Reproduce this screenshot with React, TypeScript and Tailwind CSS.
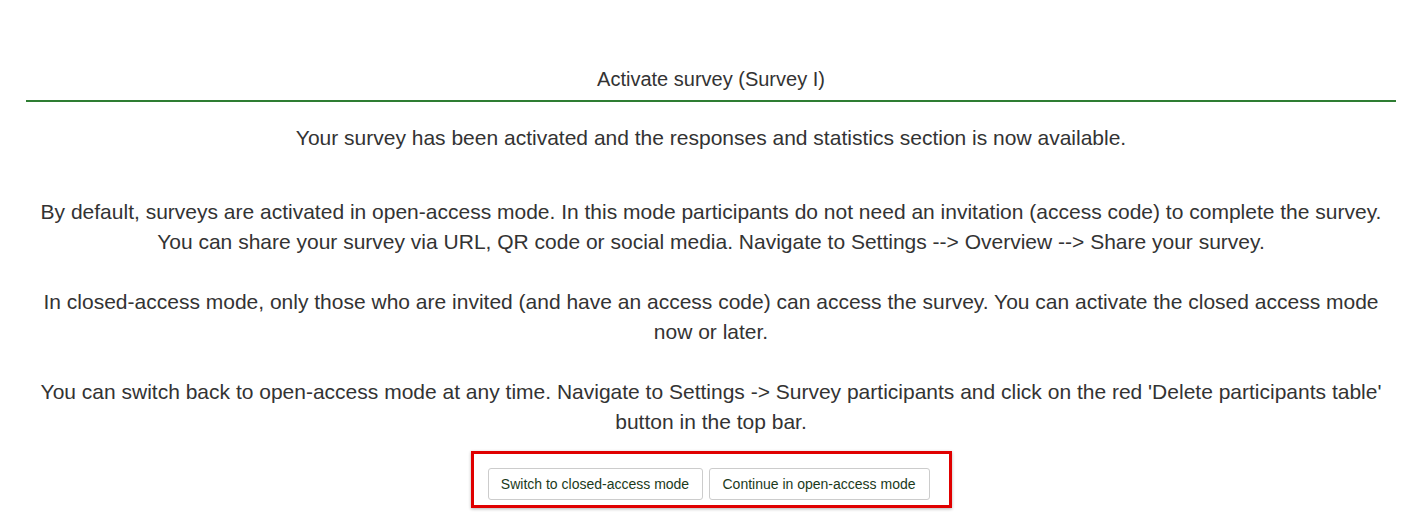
const paragraphs: string[][] = [
  [
    'By default, surveys are activated in open-access mode. In this mode participants do not need an invitation (access code) to complete the survey.',
    'You can share your survey via URL, QR code or social media. Navigate to Settings --> Overview --> Share your survey.',
  ],
  [
    'In closed-access mode, only those who are invited (and have an access code) can access the survey. You can activate the closed access mode now or later.',
  ],
  [
    "You can switch back to open-access mode at any time. Navigate to Settings -> Survey participants and click on the red 'Delete participants table' button in the top bar.",
  ],
];

export default function App() {
  return (
    <div className="min-h-[512px] bg-white pl-[26px] pr-[16px] pt-[66px] text-[#333] font-['Liberation_Sans',Arial,sans-serif]">
      {/* Header */}
      <div className="border-b-2 border-[#2e7d32] pb-[8px] text-center text-[20px] leading-[26px]">
        Activate survey (Survey I)
      </div>

      {/* Body */}
      <div className="mx-auto mt-[21px] text-center text-[21px] leading-[30px]">
        <p>Your survey has been activated and the responses and statistics section is now available.</p>
        <div className="mt-[44px] space-y-[30px] px-[8px]">
          {paragraphs.map((lines, i) => (
            <p key={i}>
              {lines.map((line, j) => (
                <span key={j}>
                  {line}
                  {j < lines.length - 1 && <br />}
                </span>
              ))}
            </p>
          ))}
        </div>
      </div>

      {/* Actions */}
      <div className="mt-[14px] flex justify-center">
        <div className="flex gap-[6px] border-[3px] border-[#e00000] pl-[14px] pr-[19px] pt-[14px] pb-[5px] shadow-[0_1px_3px_rgba(0,0,0,0.3)]">
          <button className="h-[32px] w-[215px] rounded-[3px] border border-[#ccc] bg-white text-[14px] text-[#1b3a1b]">
            Switch to closed-access mode
          </button>
          <button className="h-[32px] w-[221px] rounded-[3px] border border-[#ccc] bg-white text-[14px] text-[#1b3a1b]">
            Continue in open-access mode
          </button>
        </div>
      </div>
    </div>
  );
}
